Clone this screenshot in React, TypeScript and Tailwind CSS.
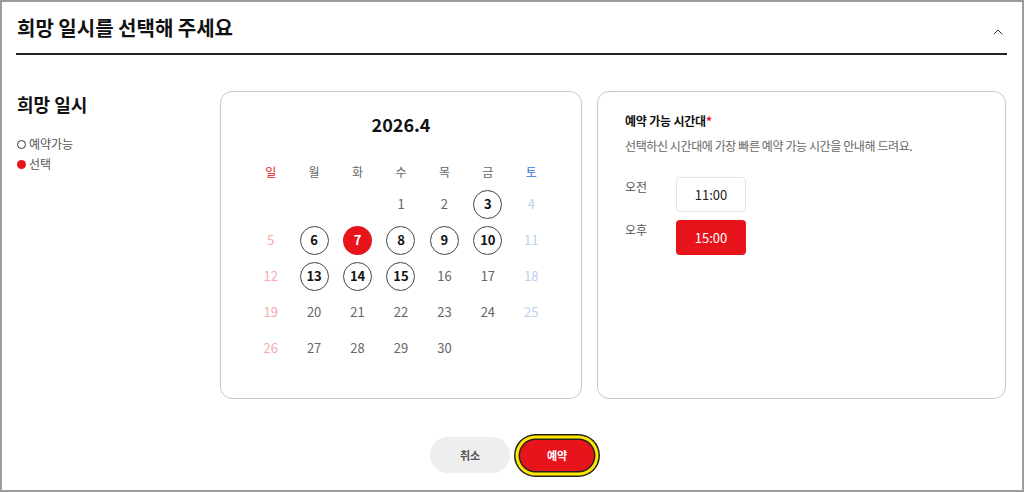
import React from 'react';
import { ChevronUp } from 'lucide-react';

const FONT = "font-['Noto_Sans_CJK_KR','Noto_Sans',sans-serif]";

const weekdays = [
  { label: '일', color: 'text-[#e8141b]' },
  { label: '월', color: 'text-[#666]' },
  { label: '화', color: 'text-[#666]' },
  { label: '수', color: 'text-[#666]' },
  { label: '목', color: 'text-[#666]' },
  { label: '금', color: 'text-[#666]' },
  { label: '토', color: 'text-[#3d72e0]' },
];

const available = [3, 6, 8, 9, 10, 13, 14, 15];
const selected = 7;

// April 2026 starts on Wednesday
const cells: (number | null)[] = [null, null, null, ...Array.from({ length: 30 }, (_, i) => i + 1)];

const DayCell = ({ day, col }: { day: number | null; col: number }) => {
  if (day === null) return <div className="h-[36px]" />;

  if (day === selected) {
    return (
      <div className="h-[36px] flex items-center justify-center">
        <div className="w-[29px] h-[29px] rounded-full bg-[#e8141b] text-white text-[13px] font-bold flex items-center justify-center">
          {day}
        </div>
      </div>
    );
  }

  if (available.includes(day)) {
    return (
      <div className="h-[36px] flex items-center justify-center">
        <div className="w-[29px] h-[29px] rounded-full border border-[#444] text-[#111] text-[13px] font-bold flex items-center justify-center">
          {day}
        </div>
      </div>
    );
  }

  const color = col === 0 ? 'text-[#f5a9ab]' : col === 6 ? 'text-[#bcd0f2]' : 'text-[#666]';
  return (
    <div className={`h-[36px] flex items-center justify-center text-[13px] ${color}`}>{day}</div>
  );
};

const App = () => {
  return (
    <div className={`w-[1024px] h-[492px] border-2 border-[#9c9c9c] bg-white ${FONT}`}>
      {/* Header */}
      <div className="mx-[14px] mr-[15px] h-[53px] border-b-2 border-[#222] flex items-center justify-between">
        <h1 className="text-[20px] font-bold text-[#111] pl-[1px]">희망 일시를 선택해 주세요</h1>
        <ChevronUp className="w-[16px] h-[16px] text-[#333] mr-[1px] mt-[9px]" strokeWidth={1.5} />
      </div>

      {/* Body */}
      <div className="flex pt-[36px] pl-[15px]">
        {/* Left column */}
        <div className="w-[203px]">
          <h2 className="text-[18px] font-bold text-[#111] leading-[26px]">희망 일시</h2>
          <div className="mt-[17px] text-[12px] text-[#555]">
            <div className="flex items-center gap-[3px] leading-[20px]">
              <span className="w-[9px] h-[9px] rounded-full border border-[#333]" />
              예약가능
            </div>
            <div className="flex items-center gap-[3px] leading-[20px]">
              <span className="w-[9px] h-[9px] rounded-full bg-[#e8141b]" />
              선택
            </div>
          </div>
        </div>

        {/* Calendar */}
        <div className="w-[362px] h-[308px] border border-[#c8c8c8] rounded-[12px] pt-[18px]">
          <div className="text-center text-[18px] font-bold text-[#111] leading-[28px]">2026.4</div>
          <div className="w-[304px] mx-auto mt-[19px]">
            <div className="grid grid-cols-7 h-[29px] items-center">
              {weekdays.map((w) => (
                <div key={w.label} className={`text-center text-[12px] ${w.color}`}>
                  {w.label}
                </div>
              ))}
            </div>
            <div className="grid grid-cols-7">
              {cells.map((d, i) => (
                <DayCell key={i} day={d} col={i % 7} />
              ))}
            </div>
          </div>
        </div>

        {/* Time slots */}
        <div className="ml-[15px] w-[409px] h-[308px] border border-[#c8c8c8] rounded-[12px] pt-[19px] pl-[27px]">
          <div className="text-[12px] font-bold text-[#111] leading-[20px] tracking-[-0.2px]">
            예약 가능 시간대<span className="text-[#e8141b]">*</span>
          </div>
          <div className="mt-[5px] text-[12px] text-[#666] leading-[20px] tracking-[-0.4px]">
            선택하신 시간대에 가장 빠른 예약 가능 시간을 안내해 드려요.
          </div>
          <div className="mt-[21px] flex flex-col gap-[8px]">
            <div className="flex items-start">
              <span className="w-[51px] text-[12px] text-[#555] leading-[20px]">오전</span>
              <button className="w-[70px] h-[35px] rounded-[4px] border border-[#e3e3e3] bg-white text-[13px] text-[#222]">
                11:00
              </button>
            </div>
            <div className="flex items-start">
              <span className="w-[51px] text-[12px] text-[#555] leading-[20px]">오후</span>
              <button className="w-[70px] h-[35px] rounded-[4px] bg-[#e8141b] text-[13px] text-white">
                15:00
              </button>
            </div>
          </div>
        </div>
      </div>

      {/* Actions */}
      <div className="mt-[38px] flex items-center justify-center gap-[10px]">
        <button className="w-[80px] h-[36px] rounded-full bg-[#eeeeee] text-[11px] font-bold text-[#555]">
          취소
        </button>
        <button className="w-[74px] h-[31px] rounded-full bg-[#e8141b] text-[11px] font-bold text-white shadow-[0_0_0_1.5px_#222,0_0_0_4.5px_#ffe600,0_0_0_6px_#222]">
          예약
        </button>
      </div>
    </div>
  );
};

export default App;
